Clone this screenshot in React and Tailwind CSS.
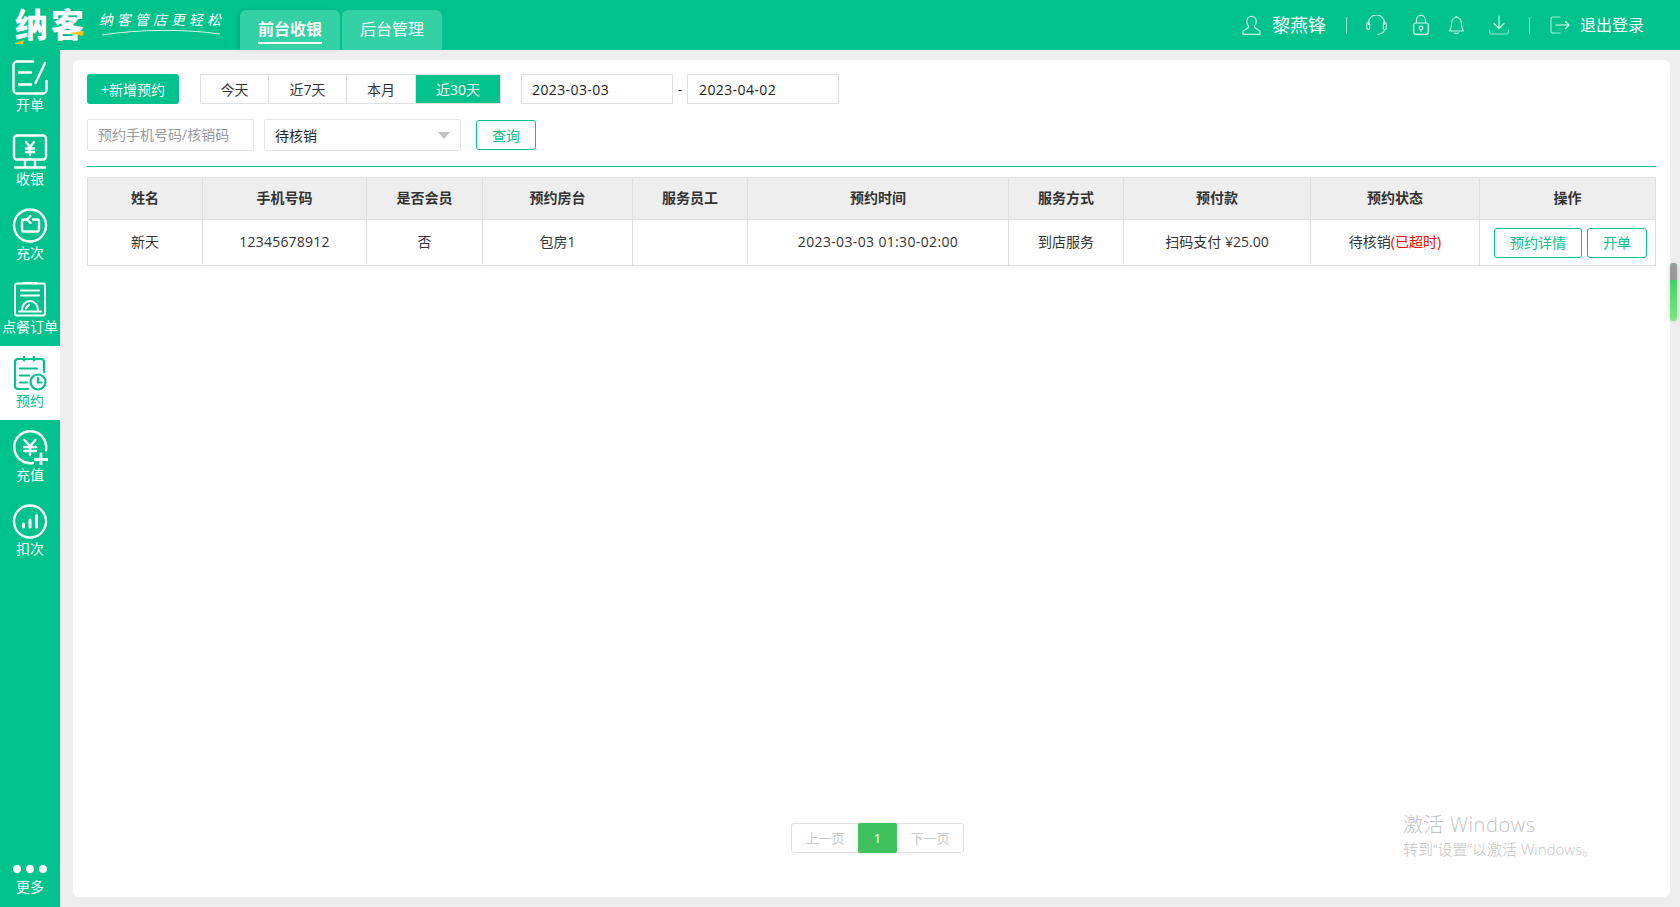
import { useState } from 'react';

const rows = [
  { name: '新天', phone: '12345678912', member: '否', room: '包房1', staff: '', time: '2023-03-03 01:30-02:00', mode: '到店服务', pay: '扫码支付 ¥25.00' },
];

const columns = [
  ['姓名', 'w-[115px]'],
  ['手机号码', 'w-[164px]'],
  ['是否会员', 'w-[116px]'],
  ['预约房台', 'w-[150px]'],
  ['服务员工', 'w-[115px]'],
  ['预约时间', 'w-[261px]'],
  ['服务方式', 'w-[115px]'],
  ['预付款', 'w-[187px]'],
  ['预约状态', 'w-[169px]'],
  ['操作', 'w-[176px]'],
];

function IconOpen() {
  return (
    <svg width="36" height="35" viewBox="0 0 36 35" fill="none" stroke="currentColor" strokeWidth="2.4" strokeLinecap="round">
      <path d="M21 1.500H5a3.500 3.500 0 0 0-3.500 3.500v25A3.500 3.500 0 0 0 5 33.500h26a3.500 3.500 0 0 0 3.500-3.500v-9" />
      <path d="M7 12.500h12M7 24.500h12M33 3 23.500 23" />
    </svg>
  );
}

function IconCashier() {
  return (
    <svg width="36" height="35" viewBox="0 0 36 35" fill="none" stroke="currentColor" strokeWidth="2.4" strokeLinecap="round">
      <rect x="2" y="1.500" width="32" height="24" rx="3" />
      <path d="M14 8l4 5 4-5M18 13v8M14 14.500h8M14 18h8" />
      <path d="M13 26v7M23 26v7M3 33.500h30" />
    </svg>
  );
}

function IconRecharge() {
  return (
    <svg width="36" height="35" viewBox="0 0 36 35" fill="none" stroke="currentColor" strokeWidth="2.4" strokeLinecap="round">
      <circle cx="18" cy="17.500" r="16" />
      <path d="M21 11.500h4a2 2 0 0 1 2 2v8a2 2 0 0 1-2 2H12a2 2 0 0 1-2-2v-8a2 2 0 0 1 2-2h3" />
      <path d="M18.500 8 15 11.500l3.500 3.500" />
    </svg>
  );
}

function IconFoodOrder() {
  return (
    <svg width="36" height="35" viewBox="0 0 36 35" fill="none" stroke="currentColor" strokeWidth="2" strokeLinecap="round">
      <path d="M12 1.500H5a2 2 0 0 0-2 2v28a2 2 0 0 0 2 2h26a2 2 0 0 0 2-2v-28a2 2 0 0 0-2-2h-7" />
      <path d="M12 1h12" strokeWidth="3" />
      <path d="M9 8.500h18M9 13.500h18M7 29.500h22" />
      <path d="M10 28c0-5 3.500-9 8-9s8 4 8 9" strokeWidth="2.200" />
      <path d="M17 23c-1.500.8-2.500 2-3 3.500" strokeWidth="2.200" />
    </svg>
  );
}

function IconReserve() {
  return (
    <svg width="36" height="35" viewBox="0 0 36 35" fill="none" stroke="currentColor" strokeWidth="2.2" strokeLinecap="round">
      <path d="M16 33H6a3 3 0 0 1-3-3V6a3 3 0 0 1 3-3h23a3 3 0 0 1 3 3v10" />
      <path d="M12 0.500v4M22 0.500v4M8 12.500h17M8 19.500h9M8 26.500h7" />
      <circle cx="26" cy="26" r="7.500" />
      <path d="M26 22v4.500h3.500" />
    </svg>
  );
}

function IconTopup() {
  return (
    <svg width="36" height="35" viewBox="0 0 36 35" fill="none" stroke="currentColor" strokeWidth="2.4" strokeLinecap="round">
      <path d="M21 33a16 16 0 1 1 13-13" />
      <path d="M12.500 10l5.500 6 5.500-6M18 16v9M12 17h12M12 21h12" />
      <path d="M29 24v11M23 29.500h12" strokeWidth="2.800" />
    </svg>
  );
}

function IconDeduct() {
  return (
    <svg width="36" height="35" viewBox="0 0 36 35" fill="none" stroke="currentColor" strokeWidth="2.4" strokeLinecap="round">
      <circle cx="18" cy="17.500" r="16" />
      <path d="M11.500 20v3M18 16v7M24.500 11.500V23" strokeWidth="3" />
    </svg>
  );
}

const sideItems = [
  { label: '开单', icon: IconOpen },
  { label: '收银', icon: IconCashier },
  { label: '充次', icon: IconRecharge },
  { label: '点餐订单', icon: IconFoodOrder },
  { label: '预约', icon: IconReserve, active: true },
  { label: '充值', icon: IconTopup },
  { label: '扣次', icon: IconDeduct },
];

function Sidebar() {
  return (
    <aside className="w-[60px] shrink-0 flex flex-col bg-[#00c28c] text-white">
      {sideItems.map(({ label, icon: Icon, active }) => (
        <div key={label} className={`h-[74px] pt-[10px] flex flex-col items-center whitespace-nowrap ${active ? 'bg-white text-[#00c28c]' : ''}`}>
          <Icon />
          <span className="text-[14px] leading-[20px]">{label}</span>
        </div>
      ))}
      <div className="mt-auto h-[42px] flex flex-col items-center">
        <div className="flex gap-[5px] h-[8px]">
          <span className="w-[8px] h-[8px] rounded-full bg-white" />
          <span className="w-[8px] h-[8px] rounded-full bg-white" />
          <span className="w-[8px] h-[8px] rounded-full bg-white" />
        </div>
        <span className="mt-[4px] text-[14px] leading-[20px]">更多</span>
      </div>
    </aside>
  );
}

function Header() {
  return (
    <header className="h-[50px] shrink-0 flex bg-[#00c28c] text-white">
      <div className="w-[240px] shrink-0 flex items-center pl-[15px]">
        <div className="relative w-[72px] text-[33px] leading-[44px] font-black tracking-[3px] whitespace-nowrap">
          纳客
          <svg className="absolute left-0 top-[28px]" width="72" height="16" viewBox="0 0 72 16">
            <path d="M0 12 9 9 8 13H0zM54 2l15-2-1 5z" fill="#f5c518" />
          </svg>
        </div>
        <div className="relative ml-[13px] -mt-[10px]">
          <div className="text-[14px] leading-[20px] font-normal tracking-[4px] -skew-x-12 whitespace-nowrap">纳客管店更轻松</div>
          <svg className="absolute left-0 top-[18px]" width="122" height="8" viewBox="0 0 122 8" fill="none">
            <path d="M2 7C40 1 85 1 120 6" stroke="#d5f5ea" strokeWidth="1" />
          </svg>
        </div>
      </div>
      <div className="flex items-end gap-[2px]">
        <div className="w-[100px] h-[40px] rounded-t-[6px] bg-[#33d1a3] flex justify-center pt-[7px] shadow-[-2px_0_4px_rgba(0,0,0,0.08)]">
          <span className="h-[27px] text-[16px] leading-[24px] font-bold border-b-2 border-white">前台收银</span>
        </div>
        <div className="w-[100px] h-[40px] rounded-t-[6px] bg-[#33d1a3] flex justify-center pt-[7px]">
          <span className="text-[16px] leading-[24px]">后台管理</span>
        </div>
      </div>
      <div className="ml-auto pr-[36px] flex items-center">
        <svg width="19" height="20" viewBox="0 0 19 20" fill="none" stroke="#c9f2e5" strokeWidth="1.200">
          <path d="M6.500 11C5 9.500 4.800 7.500 4.800 6a4.700 4.700 0 0 1 9.400 0c0 1.500-.2 3.500-1.700 5v1.500L18 16v3.400H1V16l5.500-3.500z" />
        </svg>
        <span className="ml-[11px] text-[18px] leading-[24px]">黎燕锋</span>
        <span className="ml-[20px] w-px h-[17px] bg-white/60" />
        <svg className="ml-[19px]" width="21" height="20" viewBox="0 0 21 20" fill="none" stroke="#c9f2e5" strokeWidth="1.200" strokeLinecap="round">
          <path d="M2.500 9.500V8a8 8 0 0 1 16 0v1.500" />
          <rect x="0.700" y="7.500" width="3" height="7" rx="1.500" />
          <rect x="17.300" y="7.500" width="3" height="7" rx="1.500" />
          <path d="M18.500 14.500c-.5 2.800-3 4.500-6.500 4.800" />
        </svg>
        <svg className="ml-[26px]" width="16" height="20" viewBox="0 0 16 20" fill="none" stroke="#e2f9f1" strokeWidth="1.200">
          <rect x="0.700" y="8" width="14.600" height="11.300" rx="2" />
          <path d="M3.500 8V5a4.500 4.500 0 0 1 9 0v3" />
          <circle cx="8" cy="13" r="1.800" />
          <path d="M8 15v1.500" />
        </svg>
        <svg className="ml-[20px]" width="15" height="20" viewBox="0 0 15 20" fill="none" stroke="#c9f2e5" strokeWidth="1.200">
          <path d="M7.500 2.500c-3 0-4.800 2.500-4.800 5.500 0 4-1 6-2 8h13.600c-1-2-2-4-2-8 0-3-1.800-5.500-4.800-5.500z" />
          <path d="M6.500 2.500a1 1 0 0 1 2 0M5.500 17.500c.5 1.500 3.500 1.500 4 0" />
        </svg>
        <svg className="ml-[25px]" width="20" height="20" viewBox="0 0 20 20" fill="none" stroke="#c9f2e5" strokeWidth="1.200" strokeLinecap="round" strokeLinejoin="round">
          <path d="M10 1v12M5 8.500l5 5 5-5" />
          <path d="M.7 15v2.500a1.500 1.500 0 0 0 1.500 1.500h15.600a1.500 1.500 0 0 0 1.500-1.500V15" stroke="#8fe6cc" />
        </svg>
        <span className="ml-[20px] w-px h-[17px] bg-white/60" />
        <svg className="ml-[20px]" width="20" height="18" viewBox="0 0 20 18" fill="none" stroke="#a5ecd6" strokeWidth="1.200" strokeLinecap="round" strokeLinejoin="round">
          <path d="M10 1H3a2 2 0 0 0-2 2v12a2 2 0 0 0 2 2h7" />
          <path d="M6 9h13M15.500 5.500 19 9l-3.500 3.500" stroke="#e2f9f1" />
        </svg>
        <span className="ml-[10px] text-[16px] leading-[24px]">退出登录</span>
      </div>
    </header>
  );
}

function Toolbar() {
  const [range, setRange] = useState('近30天');
  const ranges = [
    ['今天', 'w-[67px]'],
    ['近7天', 'w-[78px]'],
    ['本月', 'w-[69px]'],
    ['近30天', 'w-[85px]'],
  ];

  return (
    <>
      <div className="flex items-center h-[30px]">
        <button className="w-[92px] h-[30px] rounded-[3px] bg-[#00c28c] text-white text-[14px]">+新增预约</button>
        <div className="ml-[21px] h-[30px] flex border border-[#e0e0e0] bg-white">
          {ranges.map(([label, width]) => (
            <button
              key={label}
              onClick={() => setRange(label)}
              className={`${width} text-[14px] border-l border-[#e0e0e0] first:border-l-0 ${range === label ? 'bg-[#00c28c] text-white' : 'text-[#333]'}`}
            >
              {label}
            </button>
          ))}
        </div>
        <div className="ml-[20px] w-[152px] h-[30px] pl-[10px] border border-[#e0e0e0] text-[14px] leading-[29px] tracking-[0.4px] text-[#222]">2023-03-03</div>
        <span className="w-[14px] text-center text-[14px] text-[#333]">-</span>
        <div className="w-[152px] h-[30px] pl-[11px] border border-[#e0e0e0] text-[14px] leading-[29px] tracking-[0.4px] text-[#222]">2023-04-02</div>
      </div>
      <div className="mt-[15px] flex items-center h-[32px]">
        <div className="w-[167px] h-[32px] pl-[10px] border border-[#e5e5e5] rounded-[2px] text-[14px] leading-[30px] text-[#999] whitespace-nowrap">预约手机号码/核销码</div>
        <div className="ml-[10px] w-[197px] h-[32px] pl-[10px] pr-[10px] border border-[#e5e5e5] rounded-[2px] flex items-center justify-between text-[14px] text-[#222]">
          待核销
          <svg width="12" height="7" viewBox="0 0 12 7"><path d="M0 0h12L6 7z" fill="#c2c2c2" /></svg>
        </div>
        <button className="ml-[15px] w-[60px] h-[30px] rounded-[3px] border border-[#00c28c] text-[14px] text-[#00c28c]">查询</button>
      </div>
      <div className="mt-[15px] mr-[14px] h-px bg-[#00c28c]" />
    </>
  );
}

function ReserveTable() {
  return (
    <table className="mt-[10px] w-[1569px] table-fixed border-collapse text-[14px] text-center text-[#333]">
      <colgroup>
        {columns.map(([label, width]) => <col key={label} className={width} />)}
      </colgroup>
      <thead>
        <tr className="h-[42px] bg-[#eeeeee]">
          {columns.map(([label]) => (
            <th key={label} className="border border-[#e0e0e0] pb-[2px] font-bold text-[#333]">{label}</th>
          ))}
        </tr>
      </thead>
      <tbody>
        {rows.map((row) => (
          <tr key={row.phone} className="h-[46px]">
            <td className="border border-[#e0e0e0] pb-[2px]">{row.name}</td>
            <td className="border border-[#e0e0e0] pb-[2px] tracking-[0.2px]">{row.phone}</td>
            <td className="border border-[#e0e0e0] pb-[2px]">{row.member}</td>
            <td className="border border-[#e0e0e0] pb-[2px]">{row.room}</td>
            <td className="border border-[#e0e0e0] pb-[2px]">{row.staff}</td>
            <td className="border border-[#e0e0e0] pb-[2px] tracking-[0.35px]">{row.time}</td>
            <td className="border border-[#e0e0e0] pb-[2px]">{row.mode}</td>
            <td className="border border-[#e0e0e0] pb-[2px]">{row.pay}</td>
            <td className="border border-[#e0e0e0] pb-[2px]">待核销<span className="text-[#ff0000]">(已超时)</span></td>
            <td className="border border-[#e0e0e0] pl-[14px]">
              <div className="flex gap-[5px]">
                <button className="w-[88px] h-[30px] rounded-[3px] border border-[#00c28c] text-[#00c28c]">预约详情</button>
                <button className="w-[60px] h-[30px] rounded-[3px] border border-[#00c28c] text-[#00c28c]">开单</button>
              </div>
            </td>
          </tr>
        ))}
      </tbody>
    </table>
  );
}

function Pagination() {
  return (
    <div className="mt-auto mb-[44px] ml-[704px] self-start h-[30px] flex border border-[#e0e0e0] rounded-[3px] text-[13px] leading-[28px] text-center text-[#c8c8c8]">
      <span className="w-[66px]">上一页</span>
      <span className="w-[39px] -my-px h-[30px] leading-[30px] rounded-[2px] bg-[#3fc15d] text-white">1</span>
      <span className="w-[66px]">下一页</span>
    </div>
  );
}

export default function App() {
  return (
    <div className="relative w-[1680px] h-[907px] overflow-hidden flex flex-col bg-[#eeeeee] font-['Open_Sans','Noto_Sans_CJK_SC',sans-serif]">
      <Header />
      <div className="flex-1 min-h-0 flex">
        <Sidebar />
        <main className="flex-1 min-w-0 pt-[10px] pb-[10px] pl-[13px] pr-[10px]">
          <div className="h-full rounded-[6px] bg-white pt-[14px] pl-[14px] flex flex-col">
            <Toolbar />
            <ReserveTable />
            <Pagination />
          </div>
        </main>
      </div>

      {/* page scroll thumb floats over the gap right of the card */}
      <div className="absolute left-[1670px] top-[263px] w-[7px] h-[58px] rounded-full overflow-hidden bg-linear-to-b from-[#1fc65f] to-[#7be87f] shadow-[0_0_6px_rgba(0,0,0,0.15)]">
        <div className="h-[17px] bg-[#9a9a9a]" />
      </div>

      {/* windows activation watermark */}
      <div className="absolute left-[1403px] top-[811px] text-[#c4c4c4] whitespace-nowrap pointer-events-none">
        <div className="text-[20px] leading-[28px] font-light tracking-[0.6px]">激活 Windows</div>
        <div className="text-[15px] leading-[20px] font-light">转到“设置”以激活 Windows。</div>
      </div>
    </div>
  );
}
